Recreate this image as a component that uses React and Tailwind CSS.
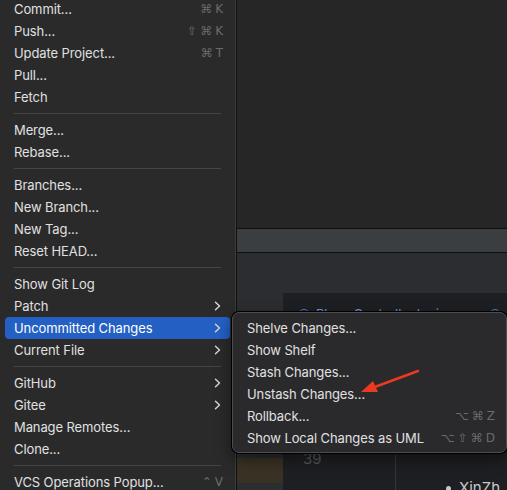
// App.jsx
// VCS menu with "Uncommitted Changes" submenu open over a dark IDE window

const SANS = { fontFamily: 'Inter, "Noto Sans", sans-serif' };
const SYM = { fontFamily: '"DejaVu Sans", sans-serif' };

const mainMenu = [
  { label: 'Commit...', keys: ['⌘', 'K'] },
  { label: 'Push...', keys: ['⇧', '⌘', 'K'] },
  { label: 'Update Project...', keys: ['⌘', 'T'] },
  { label: 'Pull...' },
  { label: 'Fetch' },
  'sep',
  { label: 'Merge...' },
  { label: 'Rebase...' },
  'sep',
  { label: 'Branches...' },
  { label: 'New Branch...' },
  { label: 'New Tag...' },
  { label: 'Reset HEAD...' },
  'sep',
  { label: 'Show Git Log' },
  { label: 'Patch', sub: true },
  { label: 'Uncommitted Changes', sub: true, active: true },
  { label: 'Current File', sub: true },
  'sep',
  { label: 'GitHub', sub: true },
  { label: 'Gitee', sub: true },
  { label: 'Manage Remotes...' },
  { label: 'Clone...' },
  'sep',
  { label: 'VCS Operations Popup...', keys: ['⌃', 'V'] },
];

const subMenu = [
  { label: 'Shelve Changes...' },
  { label: 'Show Shelf' },
  { label: 'Stash Changes...' },
  { label: 'Unstash Changes...' },
  { label: 'Rollback...', keys: ['⌥', '⌘', 'Z'] },
  { label: 'Show Local Changes as UML', keys: ['⌥', '⇧', '⌘', 'D'] },
];

function Keys({ keys }) {
  return (
    <span className="flex items-center gap-[3px] text-[12px] text-[#6b6b6d]" style={SYM}>
      {keys.map((k, i) => (
        <span key={i}>{k}</span>
      ))}
    </span>
  );
}

function Chevron() {
  return (
    <svg width="7" height="10" viewBox="0 0 7 10" className="mr-[2px]">
      <path d="M1.5 1.2 L5.5 5 L1.5 8.8" fill="none" stroke="#d4d4d4" strokeWidth="1.5" strokeLinecap="round" strokeLinejoin="round" />
    </svg>
  );
}

function MenuRow({ item, rightPad = 'pr-[7px]' }) {
  return (
    <div
      className={`h-[22px] flex items-center justify-between rounded-[4px] pl-[9px] ${rightPad} ${
        item.active ? 'bg-[#2460c4] text-white' : 'text-[#e0e0e0]'
      }`}
    >
      <span className="text-[13px] leading-none tracking-[-0.1px]">{item.label}</span>
      {item.keys && <Keys keys={item.keys} />}
      {item.sub && <Chevron />}
    </div>
  );
}

export default function App() {
  return (
    <div className="relative w-[507px] h-[490px] overflow-hidden flex bg-[#252526]" style={SANS}>
      {/* Main VCS menu */}
      <div className="w-[236px] shrink-0 h-full bg-[#2a2a2b] border-r border-[#3c3c3d] px-[5px]">
        <div className="-mt-[2px] flex flex-col">
          {mainMenu.map((item, i) =>
            item === 'sep' ? (
              <div key={i} className="h-[11px] flex items-center px-[9px]">
                <div className="h-px w-full bg-[#464647]" />
              </div>
            ) : (
              <MenuRow key={i} item={item} />
            )
          )}
        </div>
      </div>

      {/* IDE window behind */}
      <div className="flex-1 h-full flex flex-col border-l border-[#111]">
        <div className="h-[228px] bg-[#262626]" />
        <div className="h-[25px] bg-[#3b3e41] border-y border-[#0f0f0f]" />
        <div className="h-[40px] bg-[#2b2d30]" />
        <div className="flex-1 flex">
          <div className="w-[46px] bg-[#2b2d30] flex flex-col">
            <div className="h-[165px]" />
            <div className="h-[25px] bg-[#3a3225]" />
          </div>
          <div className="flex-1 bg-[#1e1f22] relative">
            <div className="flex items-center pl-[15px] pr-[6px] pt-[12px]">
              <span className="w-[12px] h-[12px] rounded-full border-[1.5px] border-[#4a7bd0]" />
              <span className="ml-[6px] text-[13px] text-[#6f93d6]">Place Controller.login</span>
              <span className="ml-auto w-[12px] h-[12px] rounded-full border-[1.5px] border-[#4a7bd0]" />
            </div>
            <div className="absolute left-[112px] top-[30px] bottom-0 w-px bg-[#35373b]" />
            <div className="absolute left-[20px] top-[155px] text-[15px] text-[#55585e]">39</div>
            <div className="absolute left-[163px] top-[184px] flex items-center gap-[8px] text-[15px] text-[#c9c9c9]">
              <span className="w-[5px] h-[5px] rounded-full bg-[#c9c9c9]" />
              <span>XinZh</span>
            </div>
          </div>
        </div>
      </div>

      {/* Submenu */}
      <div className="absolute left-[232px] top-[312px] w-[275px] rounded-[7px] bg-[#2a2a2c] border border-[#4d4d4f] shadow-[0_0_0_1px_#000,0_6px_16px_rgba(0,0,0,0.5)] px-[5px] pt-[4px] pb-[3px]">
        {subMenu.map((item, i) => (
          <MenuRow key={i} item={item} rightPad="pr-[6px]" />
        ))}
      </div>

      {/* Red annotation arrow */}
      <svg className="absolute left-0 top-0" width="507" height="490" viewBox="0 0 507 490">
        <line x1="418" y1="371" x2="372" y2="388" stroke="#ec3a22" strokeWidth="2.4" strokeLinecap="round" />
        <polygon points="361,392 373,381 378,392" fill="#ec3a22" />
      </svg>
    </div>
  );
}
